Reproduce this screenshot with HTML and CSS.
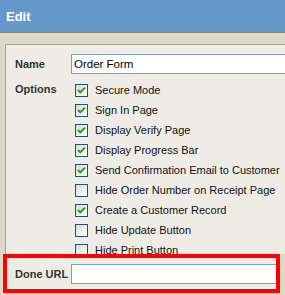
FILE: index.html
```html
<!DOCTYPE html>
<html lang="en">
<head>
  <meta charset="UTF-8" />
  <title>Edit</title>
  <link rel="stylesheet" href="styles.css">
</head>
<body>

  <!-- Otsikkopalkki -->
  <div class="title-bar">Edit</div>

  <div class="form-panel">
    <div class="form-row">
      <div class="field-label">Name</div>
      <div class="text-input">Order Form</div>
    </div>

    <div class="form-row options-row">
      <div class="field-label options-label">Options</div>
      <div class="option-list">
        <div class="option"><span class="check on"><svg viewBox="0 0 11 11"><path d="M2 5 L4.3 7.3 L9 2.6" /></svg></span>Secure Mode</div>
        <div class="option"><span class="check on"><svg viewBox="0 0 11 11"><path d="M2 5 L4.3 7.3 L9 2.6" /></svg></span>Sign In Page</div>
        <div class="option"><span class="check on"><svg viewBox="0 0 11 11"><path d="M2 5 L4.3 7.3 L9 2.6" /></svg></span>Display Verify Page</div>
        <div class="option"><span class="check on"><svg viewBox="0 0 11 11"><path d="M2 5 L4.3 7.3 L9 2.6" /></svg></span>Display Progress Bar</div>
        <div class="option"><span class="check on"><svg viewBox="0 0 11 11"><path d="M2 5 L4.3 7.3 L9 2.6" /></svg></span>Send Confirmation Email to Customer</div>
        <div class="option"><span class="check"></span>Hide Order Number on Receipt Page</div>
        <div class="option"><span class="check on"><svg viewBox="0 0 11 11"><path d="M2 5 L4.3 7.3 L9 2.6" /></svg></span>Create a Customer Record</div>
        <div class="option"><span class="check"></span>Hide Update Button</div>
        <div class="option"><span class="check"></span>Hide Print Button</div>
      </div>
    </div>
  </div>

  <!-- Korostettu rivi -->
  <div class="done-row">
    <div class="field-label done-label">Done URL</div>
    <div class="text-input done-input"></div>
  </div>

</body>
</html>
```

FILE: styles.css
```css
html,
body {
  overflow: hidden;
}

body {
  margin: 0;
  padding: 0;
  background-color: #dcd9c8;
  font-family: 'Liberation Sans', Arial, sans-serif;
  font-size: 11px;
  color: #111;
}

.title-bar {
  height: 33px;
  box-sizing: border-box;
  padding: 9px 0 0 6px;
  background-color: #6599ca;
  border-bottom: 1px solid #8a8872;
  color: #fff;
  font-weight: bold;
  font-size: 13px;
  line-height: 15px;
}

.form-panel {
  margin: 11px 0 0 5px;
  width: 340px;
  height: 210px;
  box-sizing: border-box;
  overflow: hidden;
  background-color: #eeece5;
  border-top: 1px solid #a8a690;
  border-left: 1px solid #a8a690;
  padding: 9px 0 0 9px;
}

.form-row {
  display: flex;
  align-items: center;
}

.field-label {
  width: 56px;
  flex: none;
  font-weight: bold;
  color: #333;
}

.text-input {
  flex: 1;
  height: 20px;
  box-sizing: border-box;
  background-color: #fff;
  border: 1px solid #7f9db9;
  padding: 0 2px;
  line-height: 18px;
  font-size: 11.5px;
  color: #000;
}

.options-row {
  align-items: flex-start;
  margin-top: 6px;
}

.options-label {
  padding-top: 2px;
  line-height: 14px;
}

.option-list {
  display: flex;
  flex-direction: column;
  padding-left: 4px;
}

.option {
  height: 20px;
  display: flex;
  align-items: center;
  gap: 7px;
  white-space: nowrap;
  font-size: 11px;
  color: #111;
}

.check {
  width: 13px;
  height: 13px;
  box-sizing: border-box;
  border: 1px solid #1c5180;
  background: linear-gradient(135deg, #dcdbd3 0%, #f4f4f0 70%, #fff 100%);
  display: block;
  flex: none;
}

.check svg {
  width: 11px;
  height: 11px;
  display: block;
}

.check path {
  fill: none;
  stroke: #21a121;
  stroke-width: 2;
}

/* Punainen korostus */
.done-row {
  display: flex;
  align-items: center;
  margin-left: 3px;
  width: 277px;
  height: 39px;
  box-sizing: border-box;
  border: 4px solid #f00;
  background-color: #eeece5;
  padding-left: 8px;
}

.done-input {
  margin-top: 1px;
  border-right: none;
}
```
